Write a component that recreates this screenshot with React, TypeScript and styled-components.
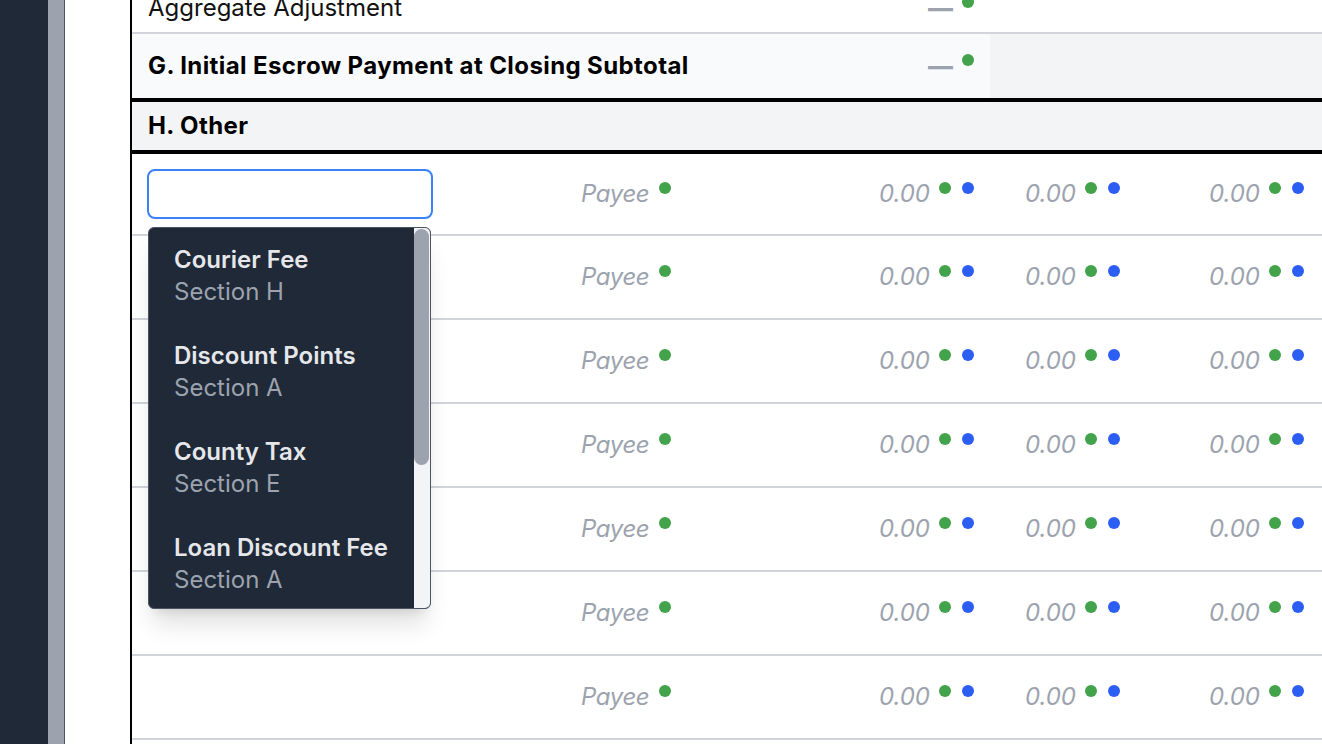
import React from "react";
import styled, { createGlobalStyle } from "styled-components";

const GlobalStyle = createGlobalStyle`
  html, body { margin: 0; padding: 0; background: #ffffff; overflow: hidden; }
  body { font-family: Inter, "Noto Sans", "Liberation Sans", sans-serif; }
  * { box-sizing: border-box; }
`;

const COLS = "433px 235px 190px 146px 184px 212px";

const Page = styled.div`
  display: flex;
  width: 1322px;
  height: 744px;
  overflow: hidden;
`;

const NavRail = styled.aside`
  flex: none;
  width: 48px;
  background: #1f2937;
`;

const Splitter = styled.div`
  flex: none;
  width: 17px;
  background: #9ca3af;
  border-right: 1px solid #4b5563;
`;

const Main = styled.main`
  flex: 1;
  min-width: 0;
  padding-left: 65px;
  overflow: hidden;
`;

const Table = styled.div`
  width: 1400px;
  border-left: 2px solid #000;
  font-size: 24px;
  color: #111;
`;

const Row = styled.div<{ $h: number; $border: string; $bg?: string }>`
  display: grid;
  grid-template-columns: ${COLS};
  grid-template-rows: ${(p) => p.$h}px;
  height: ${(p) => p.$h}px;
  box-sizing: content-box;
  border-bottom: ${(p) => p.$border};
  background: ${(p) => p.$bg || "#ffffff"};
  align-items: stretch;
`;

const Cell = styled.div<{ $span?: number; $bg?: string; $justify?: string; $align?: string; $pb?: number }>`
  grid-column: span ${(p) => p.$span || 1};
  min-height: 0;
  display: flex;
  align-items: ${(p) => p.$align || "center"};
  justify-content: ${(p) => p.$justify || "flex-start"};
  padding: 0 16px ${(p) => p.$pb || 0}px 16px;
  background: ${(p) => p.$bg || "transparent"};
  line-height: 32px;
  white-space: nowrap;
  position: relative;
`;

const Label = styled.span<{ $bold?: boolean }>`
  font-weight: ${(p) => (p.$bold ? 700 : 400)};
  letter-spacing: ${(p) => (p.$bold ? "0.4px" : "0")};
  color: ${(p) => (p.$bold ? "#000" : "#111")};
`;

const Muted = styled.span<{ $gap?: number; $track?: number }>`
  display: inline-flex;
  align-items: center;
  gap: ${(p) => p.$gap ?? 9}px;
  font-style: italic;
  letter-spacing: ${(p) => p.$track ?? 0}px;
  color: #9ca3af;
`;

const Dash = styled.span`
  font-style: normal;
  font-weight: 800;
  color: #9ca3af;
  font-size: 25px;
  line-height: 32px;
`;

const Dots = styled.span`
  display: inline-flex;
  gap: 11px;
  margin-bottom: 13px;
`;

const Dot = styled.span<{ $c: string }>`
  width: 12px;
  height: 12px;
  border-radius: 50%;
  background: ${(p) => p.$c};
`;

const GREEN = "#43a34b";
const BLUE = "#2d5ef4";

const SearchInput = styled.input`
  width: 286px;
  height: 50px;
  margin-left: -1px;
  border: 2px solid #3b82f6;
  border-radius: 8px;
  background: #fff;
  outline: none;
  font: inherit;
  padding: 0 12px;
`;

const Dropdown = styled.div`
  position: absolute;
  top: 73px;
  left: 16px;
  width: 283px;
  height: 382px;
  display: flex;
  background: #1f2937;
  border: 1px solid #4b5563;
  border-radius: 6px;
  box-shadow: 0 20px 25px -5px rgba(0, 0, 0, 0.12), 0 8px 10px -6px rgba(0, 0, 0, 0.1);
  overflow: hidden;
  z-index: 10;
`;

const OptionList = styled.ul`
  flex: 1;
  list-style: none;
  margin: 0;
  padding: 0;
  overflow: hidden;
`;

const ScrollTrack = styled.div`
  flex: none;
  width: 16px;
  background: #f3f4f6;
  padding-top: 1px;
`;

const ScrollThumb = styled.div`
  width: 15px;
  height: 236px;
  border-radius: 8px;
  background: #9ca3af;
`;

const Option = styled.li`
  padding: 16px 25px;
  line-height: 32px;
  font-size: 24px;
  white-space: nowrap;
`;

const OptionTitle = styled.div`
  font-weight: 600;
  color: #e5e7eb;
`;

const OptionSub = styled.div`
  color: #9ca3af;
`;

const options = [
  ["Courier Fee", "Section H"],
  ["Discount Points", "Section A"],
  ["County Tax", "Section E"],
  ["Loan Discount Fee", "Section A"],
];

const DotPair = () => (
  <Dots>
    <Dot $c={GREEN} />
    <Dot $c={BLUE} />
  </Dots>
);

const AmountCell = () => (
  <Cell $justify="flex-end">
    <Muted>
      0.00
      <DotPair />
    </Muted>
  </Cell>
);

const EmptyValue = () => (
  <Muted>
    <Dash>—</Dash>
    <Dots>
      <Dot $c={GREEN} />
    </Dots>
  </Muted>
);

export default function App() {
  const dataRows = [80, 82, 82, 82, 82, 82, 82, 82];
  return (
    <>
      <GlobalStyle />
      <Page>
        <NavRail />
        <Splitter />
        <Main>
          <Table>
            <Row $h={32} $border="2px solid #d1d5db">
              <Cell $span={2} $align="flex-end" $pb={8}>
                <Label>Aggregate Adjustment</Label>
              </Cell>
              <Cell $justify="flex-end" $align="flex-end" $pb={8}>
                <EmptyValue />
              </Cell>
            </Row>
            <Row $h={64} $border="4px solid #000" $bg="#f3f4f6">
              <Cell $span={2} $bg="#f9fafb">
                <Label $bold>G. Initial Escrow Payment at Closing Subtotal</Label>
              </Cell>
              <Cell $justify="flex-end" $bg="#f9fafb">
                <EmptyValue />
              </Cell>
            </Row>
            <Row $h={48} $border="4px solid #000" $bg="#f3f4f6">
              <Cell $span={6}>
                <Label $bold>H. Other</Label>
              </Cell>
            </Row>
            {dataRows.map((h, i) => (
              <Row key={i} $h={h} $border="2px solid #d1d5db">
                <Cell>
                  {i === 0 && (
                    <>
                      <SearchInput aria-label="Fee name" />
                      <Dropdown>
                        <OptionList>
                          {options.map(([t, s]) => (
                            <Option key={t}>
                              <OptionTitle>{t}</OptionTitle>
                              <OptionSub>{s}</OptionSub>
                            </Option>
                          ))}
                        </OptionList>
                        <ScrollTrack>
                          <ScrollThumb />
                        </ScrollTrack>
                      </Dropdown>
                    </>
                  )}
                </Cell>
                <Cell>
                  <Muted $gap={10} $track={-0.4}>
                    Payee
                    <Dots>
                      <Dot $c={GREEN} />
                    </Dots>
                  </Muted>
                </Cell>
                <AmountCell />
                <AmountCell />
                <AmountCell />
                <Cell />
              </Row>
            ))}
          </Table>
        </Main>
      </Page>
    </>
  );
}
